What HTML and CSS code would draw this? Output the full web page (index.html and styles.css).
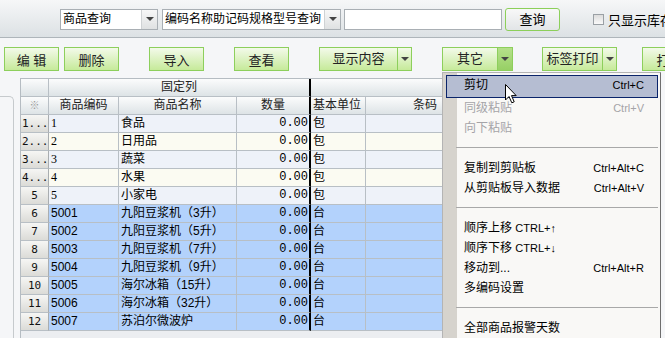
FILE: index.html
```html
<!DOCTYPE html>
<html lang="zh-CN">
  <head>
    <meta charset="UTF-8" />
    <title>商品查询</title>
    <link rel="stylesheet" href="styles.css">
  </head>
  <body>
    <div class="topbar">
      <div class="combo c1"><span>商品查询</span><i class="arrow"></i></div>
      <div class="combo c2"><span>编码名称助记码规格型号查询</span><i class="arrow"></i></div>
      <div class="search"></div>
      <div class="query">查询</div>
      <div class="check"></div>
      <span class="check-text">只显示库存</span>
    </div>

    <div class="toolbar">
      <div class="btn w55">编 辑</div>
      <div class="btn w55 m6">删除</div>
      <div class="btn w55 m31">导入</div>
      <div class="btn w55 m31">查看</div>
      <div class="split m31 s1"><span class="main-part">显示内容</span><span class="drop"></span></div>
      <div class="split m31 s2"><span class="main-part">其它</span><span class="drop on"></span></div>
      <div class="split m30 s3"><span class="main-part">标签打印</span><span class="drop"></span></div>
      <div class="btn w55 m26">打印</div>
    </div>

    <div class="main">
      <div class="side"></div>
      <div class="grid">
        <div class="hd"></div>
        <div class="hd q span3">固定列</div>
        <div class="hd span2"></div>
        <div class="hd"></div>

        <div class="hd star">※</div>
        <div class="hd">商品编码</div>
        <div class="hd">商品名称</div>
        <div class="hd q">数量</div>
        <div class="hd left">基本单位</div>
        <div class="hd right">条码</div>
        <div class="hd"></div>

        <div class="rh l">1...</div><div class="odd serif">1</div><div class="odd">食品</div><div class="odd q num">0.00</div><div class="odd">包</div><div class="odd"></div><div class="odd"></div>
        <div class="rh l">2...</div><div class="even serif">2</div><div class="even">日用品</div><div class="even q num">0.00</div><div class="even">包</div><div class="even"></div><div class="even"></div>
        <div class="rh l">3...</div><div class="odd serif">3</div><div class="odd">蔬菜</div><div class="odd q num">0.00</div><div class="odd">包</div><div class="odd"></div><div class="odd"></div>
        <div class="rh l">4...</div><div class="even serif">4</div><div class="even">水果</div><div class="even q num">0.00</div><div class="even">包</div><div class="even"></div><div class="even"></div>
        <div class="rh">5</div><div class="odd serif">5</div><div class="odd">小家电</div><div class="odd q num">0.00</div><div class="odd">包</div><div class="odd"></div><div class="odd"></div>
        <div class="rh">6</div><div class="sel">5001</div><div class="sel">九阳豆浆机（3升）</div><div class="sel q num">0.00</div><div class="sel">台</div><div class="sel"></div><div class="sel"></div>
        <div class="rh">7</div><div class="sel">5002</div><div class="sel">九阳豆浆机（5升）</div><div class="sel q num">0.00</div><div class="sel">台</div><div class="sel"></div><div class="sel"></div>
        <div class="rh">8</div><div class="sel">5003</div><div class="sel">九阳豆浆机（7升）</div><div class="sel q num">0.00</div><div class="sel">台</div><div class="sel"></div><div class="sel"></div>
        <div class="rh">9</div><div class="sel">5004</div><div class="sel">九阳豆浆机（9升）</div><div class="sel q num">0.00</div><div class="sel">台</div><div class="sel"></div><div class="sel"></div>
        <div class="rh">10</div><div class="sel">5005</div><div class="sel">海尔冰箱（15升）</div><div class="sel q num">0.00</div><div class="sel">台</div><div class="sel"></div><div class="sel"></div>
        <div class="rh">11</div><div class="sel">5006</div><div class="sel">海尔冰箱（32升）</div><div class="sel q num">0.00</div><div class="sel">台</div><div class="sel"></div><div class="sel"></div>
        <div class="rh">12</div><div class="sel">5007</div><div class="sel">苏泊尔微波炉</div><div class="sel q num">0.00</div><div class="sel">台</div><div class="sel"></div><div class="sel"></div>
      </div>
    </div>

    <!-- 右键菜单 -->
    <div class="menu">
      <div class="item hot"><span>剪切</span><span class="key">Ctrl+C</span></div>
      <div class="item off"><span>同级粘贴</span><span class="key">Ctrl+V</span></div>
      <div class="item off"><span>向下粘贴</span></div>
      <div class="sep"></div>
      <div class="item"><span>复制到剪贴板</span><span class="key">Ctrl+Alt+C</span></div>
      <div class="item"><span>从剪贴板导入数据</span><span class="key">Ctrl+Alt+V</span></div>
      <div class="sep"></div>
      <div class="item"><span>顺序上移 <b class="lat">CTRL+↑</b></span></div>
      <div class="item"><span>顺序下移 <b class="lat">CTRL+↓</b></span></div>
      <div class="item"><span>移动到...</span><span class="key">Ctrl+Alt+R</span></div>
      <div class="item"><span>多编码设置</span></div>
      <div class="sep"></div>
      <div class="item"><span>全部商品报警天数</span></div>
    </div>

    <svg class="cursor" width="14" height="22" viewBox="0 0 14 22">
      <path d="M1.5 1.5 L1.5 17 L5 13.5 L7.8 19.8 L10.2 18.8 L7.5 12.6 L12.2 12.6 Z" fill="#fff" stroke="#000" stroke-width="1" stroke-linejoin="miter"/>
    </svg>
  </body>
</html>
```

FILE: styles.css
```css
body {
  margin: 0;
  width: 665px;
  height: 338px;
  overflow: hidden;
  position: relative;
  background-color: #f5f6f8;
  font-family: "Liberation Sans", "Noto Sans CJK SC", sans-serif;
  font-size: 12px;
  color: #000;
}

/* 顶部查询栏 */
.topbar {
  height: 38px;
  border-bottom: 1px solid #aeb5ba;
  background: linear-gradient(#f6f7f8, #dce1e4);
  display: flex;
  align-items: center;
  padding-left: 60px;
  padding-top: 1px;
  box-sizing: border-box;
  overflow: hidden;
}

.combo {
  display: flex;
  height: 21px;
  box-sizing: border-box;
  border: 1px solid #a9afb4;
  background-color: #fff;
  flex-shrink: 0;
}

.combo span {
  flex: 1;
  padding-left: 2px;
  line-height: 19px;
  white-space: nowrap;
  overflow: hidden;
}

.c1 { width: 98px; }
.c2 { width: 179px; margin-left: 4px; }

.arrow {
  width: 15px;
  border-left: 1px solid #cfd2d4;
  background: linear-gradient(#f7f7f7, #dfe1e2);
  position: relative;
}

.arrow::after,
.drop::after {
  content: "";
  position: absolute;
  left: 50%;
  top: 50%;
  margin: -2px 0 0 -4px;
  border-left: 4px solid transparent;
  border-right: 4px solid transparent;
  border-top: 4px solid #444;
}

.search {
  width: 158px;
  height: 21px;
  box-sizing: border-box;
  border: 1px solid #a9afb4;
  background-color: #fff;
  margin-left: 3px;
  flex-shrink: 0;
}

.query {
  width: 55px;
  height: 23px;
  box-sizing: border-box;
  border: 1px solid #8ccf5a;
  border-radius: 3px;
  background: linear-gradient(#f8f8f8, #e2e5e7);
  margin-left: 3px;
  font-size: 13px;
  text-align: center;
  line-height: 21px;
  flex-shrink: 0;
}

.check {
  width: 11px;
  height: 11px;
  box-sizing: border-box;
  border: 1px solid #9aa0a5;
  background: linear-gradient(#dcdcdc, #fafafa);
  margin-left: 33px;
  flex-shrink: 0;
}

.check-text {
  margin-left: 4px;
  font-size: 13px;
  white-space: nowrap;
}

/* 工具栏按钮 */
.toolbar {
  display: flex;
  height: 40px;
  padding: 9px 0 0 4px;
  box-sizing: border-box;
  white-space: nowrap;
  overflow: hidden;
}

.btn,
.split {
  height: 24px;
  box-sizing: border-box;
  border: 1px solid #8dcf5c;
  background: linear-gradient(#f3faea, #c6ea9a);
  font-size: 13px;
  color: #222;
  flex-shrink: 0;
}

.btn {
  display: flex;
  align-items: center;
  justify-content: center;
}

.split {
  display: flex;
}

.main-part {
  flex: 1;
  text-align: center;
  line-height: 22px;
  border-right: 1px solid #8dcf5c;
}

.drop {
  width: 13px;
  position: relative;
}

.drop.on {
  width: 14px;
  background: linear-gradient(#b5e08b, #97d065);
}

.w55 { width: 55px; }
.s1 { width: 93px; }
.s2 { width: 71px; }
.s3 { width: 75px; }
.m6 { margin-left: 5px; }
.m26 { margin-left: 25px; }
.m30 { margin-left: 29px; }
.m31 { margin-left: 30px; }

/* 表格区域 */
.main {
  display: flex;
  height: 260px;
  overflow: hidden;
}

.side {
  width: 14px;
  height: 250px;
  margin-top: 18px;
  margin-right: 6px;
  border-top: 1px solid #c6cacd;
  border-right: 1px solid #c6cacd;
  border-top-right-radius: 5px;
  box-sizing: border-box;
}

.grid {
  display: grid;
  grid-template-columns: 28px 70px 118px 74px 55px 77px 200px;
  grid-auto-rows: 18px;
  align-content: start;
  height: 260px;
  border-top: 1px solid #b5bcc2;
  border-left: 1px solid #b5bcc2;
  background-color: #eceef1;
}

.grid div {
  box-sizing: border-box;
  border-right: 1px solid #b8bfc5;
  border-bottom: 1px solid #b8bfc5;
  line-height: 17px;
  padding: 0 2px;
  white-space: nowrap;
  overflow: hidden;
}

.grid .hd {
  background: linear-gradient(#fbfcfc, #dde3e6);
  text-align: center;
  color: #222;
}

.grid .span3 { grid-column: span 3; }
.grid .span2 { grid-column: span 2; }
.grid .left { text-align: left; }
.grid .right { text-align: right; padding-right: 5px; }
.grid .star { color: #999; font-size: 10px; }

.grid .q {
  border-right: 2px solid #000;
}

.grid .num {
  text-align: right;
  font-family: "Liberation Mono", monospace;
  padding-right: 1px;
}

.grid .rh {
  background: linear-gradient(#f6f6f4, #dbdbd7);
  border-right-color: #a9adb0;
  text-align: center;
  font-family: "DejaVu Sans Mono", monospace;
  font-size: 11px;
  color: #111;
}

.grid .rh.l {
  text-align: left;
  padding-left: 1px;
}

.grid .serif {
  font-family: "Liberation Serif", serif;
}

.odd { background-color: #eef2f9; }
.even { background-color: #fbfbf2; }
.sel { background-color: #b3d2fc; }

/* 右键菜单 */
.menu {
  position: absolute;
  left: 442px;
  top: 72px;
  width: 219px;
  height: 266px;
  box-sizing: border-box;
  border: 1px solid #b4b4b4;
  border-right-color: #6e6e6e;
  border-bottom: none;
  padding: 2px 2px 0 3px;
  overflow: hidden;
  background: linear-gradient(to right, #d6d3cd 14px, #f9f8f6 14px);
}

.item {
  display: flex;
  justify-content: space-between;
  height: 20px;
  line-height: 20px;
  padding: 0 14px 0 18px;
  white-space: nowrap;
}

.item.hot {
  height: 21px;
  line-height: 19px;
  border: 1px solid #0a246a;
  background-color: #b5bdd2;
  padding: 0 13px 0 17px;
}

.item.off {
  color: #a5a4a8;
}

.key {
  font-family: "Liberation Sans", sans-serif;
  font-size: 11px;
}

.lat {
  font-weight: normal;
  font-family: "Liberation Sans", sans-serif;
  font-size: 11px;
}

.sep {
  height: 20px;
  position: relative;
}

.sep::after {
  content: "";
  position: absolute;
  left: 10px;
  right: 0;
  top: 9px;
  border-top: 1px solid #a8a8a8;
}

.cursor {
  position: absolute;
  left: 504px;
  top: 83px;
}
```
